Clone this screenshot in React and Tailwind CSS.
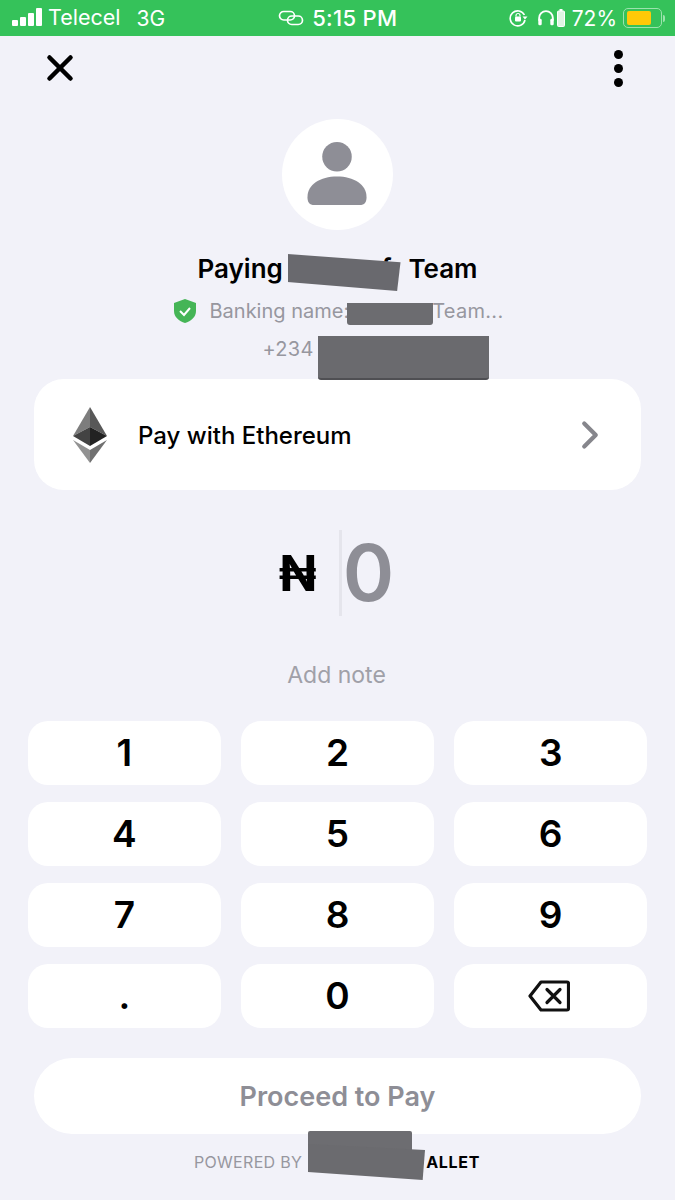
import { X, ChevronRight } from 'lucide-react';

const keys = ['1', '2', '3', '4', '5', '6', '7', '8', '9', '.', '0', 'back'];

function StatusBar() {
    return (
        <div className="h-9 bg-[#35c25a] flex items-center text-white relative pl-3 pr-[10px]">
            {/* signal */}
            <div className="flex items-end gap-[2px] h-[18px] mb-[2px]">
                <div className="w-[6px] h-[6px] bg-white rounded-[1px]"></div>
                <div className="w-[6px] h-[9px] bg-white rounded-[1px]"></div>
                <div className="w-[6px] h-[13px] bg-white rounded-[1px]"></div>
                <div className="w-[6px] h-[18px] bg-white rounded-[1px]"></div>
            </div>
            <span className="text-[21.5px] ml-[6px] leading-none">Telecel</span>
            <span className="text-[21px] ml-[16px] leading-none">3G</span>

            <div className="flex items-center ml-[113px]">
                <svg width="26" height="16" viewBox="0 0 26 16" fill="none" stroke="white" strokeWidth="1.7">
                    <rect x="1.500" y="1.500" width="15" height="8.500" rx="4.250" />
                    <rect x="9.500" y="6" width="15" height="8.500" rx="4.250" />
                </svg>
                <span className="text-[22px] font-medium ml-[8px] leading-none tracking-[0.3px]">5:15 PM</span>
            </div>

            <div className="flex items-center ml-auto">
                {/* rotation lock */}
                <svg width="20" height="18" viewBox="0 0 20 18" fill="none" stroke="white" strokeWidth="1.6">
                    <path d="M16 11a7.500 7.500 0 1 1-.6-5" />
                    <path d="M13.500 7.500h5l-2.500 3z" fill="white" stroke="none" />
                    <rect x="6" y="7.500" width="6" height="5" rx="1" fill="white" stroke="none" />
                    <path d="M7 7.500V6.500a2 2 0 0 1 4 0v1" strokeWidth="1.200" />
                </svg>
                {/* headphones */}
                <svg width="18" height="20" viewBox="0 0 21 20" fill="none" stroke="white" strokeWidth="2.200" className="ml-[8px]">
                    <path d="M2.500 13V10a8 8 0 0 1 16 0v3" />
                    <rect x="1.500" y="11" width="4" height="7.500" rx="1.500" fill="white" stroke="none" />
                    <rect x="15.500" y="11" width="4" height="7.500" rx="1.500" fill="white" stroke="none" />
                </svg>
                {/* headphone battery */}
                <svg width="8" height="18" viewBox="0 0 8 18" className="ml-[2px]">
                    <rect x="2.500" y="0" width="3" height="2" fill="white" />
                    <rect x="0.500" y="2" width="7" height="15.500" rx="1" fill="#dff5e4" stroke="white" strokeWidth="1" />
                </svg>
                <span className="text-[21px] ml-[7px] leading-none">72%</span>
                {/* battery */}
                <div className="ml-[6px] w-[39px] h-[20px] border border-[#9be3ad] rounded-[5px] p-[2px] flex">
                    <div className="w-[24px] bg-[#ffc908] rounded-[2px] ml-[1px]"></div>
                </div>
                <div className="w-[2px] h-[7px] bg-[#9be3ad] rounded-r-sm ml-[1px]"></div>
            </div>
        </div>
    );
}

function EthereumLogo() {
    return (
        <svg width="36" height="56" viewBox="0 0 36 56">
            <polygon points="18,0 18,20 1,29" fill="#7d7d7d" />
            <polygon points="18,0 35,29 18,20" fill="#585858" />
            <polygon points="18,20 1,29 18,39" fill="#434343" />
            <polygon points="18,20 35,29 18,39" fill="#222222" />
            <polygon points="1,33 18,43 18,56" fill="#929292" />
            <polygon points="35,33 18,43 18,56" fill="#707070" />
        </svg>
    );
}

function Key({ value }) {
    return (
        <button className="h-[64px] bg-white rounded-[20px] flex items-center justify-center text-[37px] font-semibold text-black leading-none pb-[2px]">
            {value === 'back' ? (
                <svg width="42" height="32" viewBox="0 0 42 32" fill="none" stroke="#111" strokeWidth="3.200" strokeLinejoin="round" strokeLinecap="round" className="mr-[3px] mt-[2px]">
                    <path d="M13 2h26a1.500 1.500 0 0 1 1.500 1.500v25a1.500 1.500 0 0 1-1.500 1.500H13L2 16z" />
                    <path d="M19 9.500l13 13M32 9.500l-13 13" />
                </svg>
            ) : value}
        </button>
    );
}

export default function App() {
    return (
        <div className="w-[675px] h-[1200px] bg-[#f2f2f9] overflow-hidden relative font-['Inter',sans-serif]">
            <StatusBar />

            <div className="flex items-center justify-between pl-[39px] pr-[52px] h-[64px]">
                <X className="w-[42px] h-[42px] text-black" strokeWidth={2.6} />
                <div className="flex flex-col gap-[5px]">
                    <div className="w-[9px] h-[9px] rounded-full bg-black"></div>
                    <div className="w-[9px] h-[9px] rounded-full bg-black"></div>
                    <div className="w-[9px] h-[9px] rounded-full bg-black"></div>
                </div>
            </div>

            <div className="flex flex-col items-center">
                <div className="w-[111px] h-[111px] rounded-full bg-white mt-[19px] flex items-center justify-center">
                    <svg width="60" height="63" viewBox="0 0 60 64" fill="#8e8e96" className="mb-[2px] mr-[1px]">
                        <circle cx="30" cy="15" r="15" />
                        <path d="M0 56c0-13 13-21 30-21s30 8 30 21c0 5-2 8-7 8H7c-5 0-7-3-7-8z" />
                    </svg>
                </div>

                <div className="relative mt-[23px] h-[32px] w-[280px] flex justify-between items-center text-[26px] font-semibold text-black leading-none">
                    <span>Paying</span>
                    <span>Team</span>
                    <span className="absolute left-[184px] top-[3px]">f</span>
                    <div className="absolute left-[90px] top-[1px] w-[113px] h-[37px] bg-[#69696e] [clip-path:polygon(0_0,100%_22%,97%_100%,0_76%)]"></div>
                </div>

                <div className="relative mt-[10px] h-[32px] w-[332px] flex items-center text-[20px] text-[#97979f] leading-none">
                    <svg width="26" height="26" viewBox="0 0 26 26">
                        <path d="M13 1l11 4v8c0 6-5 10-11 12C7 23 2 19 2 13V5z" fill="#45b556" />
                        <path d="M8 13l4 4 6-7" fill="none" stroke="white" strokeWidth="2" />
                    </svg>
                    <span className="ml-[12px]">Banking name:</span>
                    <span className="ml-auto tracking-[0.3px]">Team...</span>
                    <div className="absolute left-[175px] top-[8px] w-[86px] h-[22px] bg-[#6c6c70] rounded-b-[3px]"></div>
                </div>

                <div className="relative mt-[6px] h-[32px] w-[228px] ml-[76px] flex items-center text-[20px] text-[#97979f] leading-none tracking-[0.3px]">
                    <span className="ml-[1px]">+234</span>
                    <div className="absolute left-[56px] top-[3px] w-[171px] h-[44px] bg-[#6a6a6e] rounded-b-[3px] border-b-2 border-[#4f4f53]"></div>
                </div>
            </div>

            <div className="mx-[34px] mt-[14px] h-[111px] bg-white rounded-[30px] flex items-center pl-[38px] pr-[40px]">
                <EthereumLogo />
                <span className="ml-[30px] text-[24px] font-medium text-black mt-[2px]">Pay with Ethereum</span>
                <ChevronRight className="ml-auto w-[46px] h-[46px] text-[#86868c] mr-[-12px]" strokeWidth={2.200} />
            </div>

            <div className="mt-[40px] h-[86px] flex items-center justify-center pr-[5px]">
                <span className="text-[50px] font-bold text-black leading-none mr-[22px] ml-[3px]">₦</span>
                <div className="w-[3px] h-[86px] bg-[#e5e5ec]"></div>
                <span className="text-[78px] font-semibold text-[#8e8e96] leading-none ml-[1px]">0</span>
            </div>

            <div className="mt-[44px] h-[30px] flex items-center justify-center text-[23px] text-[#a0a0a8] pr-[2px]">Add note</div>

            <div className="grid grid-cols-3 gap-x-[20.500px] gap-y-[17px] mx-[28px] mt-[31px]">
                {keys.map((k) => (
                    <Key key={k} value={k} />
                ))}
            </div>

            <div className="mx-[34px] mt-[30px] h-[76px] bg-white rounded-full flex items-center justify-center text-[27px] font-semibold text-[#8e8e96] pt-[2px]">
                Proceed to Pay
            </div>

            <div className="relative mt-[18px] h-[20px] flex items-center text-[16px] leading-none">
                <span className="ml-[194px] text-[#97979f] tracking-[0.3px]">POWERED BY</span>
                <span className="ml-[124px] font-bold text-black tracking-[0.7px]">ALLET</span>
                <div className="absolute left-[308px] top-[-21px] w-[104px] h-[22px] bg-[#6d6d71] rounded-t-[2px]"></div>
                <div className="absolute left-[308px] top-[-8px] w-[117px] h-[36px] bg-[#6b6b6f] [clip-path:polygon(0_0,100%_17%,98%_100%,0_78%)]"></div>
            </div>
        </div>
    );
}
